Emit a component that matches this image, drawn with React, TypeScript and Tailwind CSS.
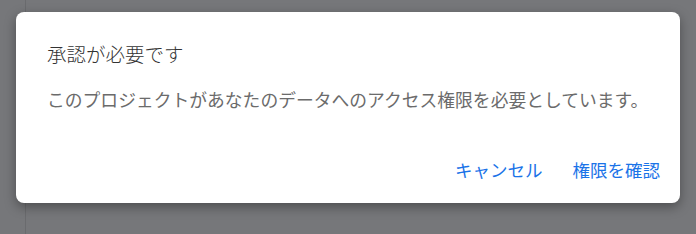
export default function App() {
  return (
    <div
      className="relative w-[696px] h-[234px] bg-[#76777a] overflow-hidden"
      style={{ fontFamily: '"Noto Sans CJK JP", "Noto Sans", sans-serif' }}
    >
      <div className="absolute left-[25px] top-0 bottom-0 w-px bg-[#6a6b6e]" />
      <div className="absolute left-[16px] top-[12px] w-[664px] h-[191px] bg-white rounded-[8px] shadow-[0_4px_12px_rgba(0,0,0,0.35)] flex flex-col pl-[31px] pr-[20px] pt-[28px]">
        <div className="text-[19.5px] leading-[28px] font-light text-[#333333]">承認が必要です</div>
        <div className="mt-[19px] text-[17.8px] leading-[24px] text-[#6b6b6b] whitespace-nowrap">
          このプロジェクトがあなたのデータへのアクセス権限を必要としています。
        </div>
        <div className="mt-auto mb-[21px] flex justify-end gap-[30px] text-[17.5px] leading-[24px] text-[#1a73e8]">
          <span>キャンセル</span>
          <span>権限を確認</span>
        </div>
      </div>
    </div>
  );
}
